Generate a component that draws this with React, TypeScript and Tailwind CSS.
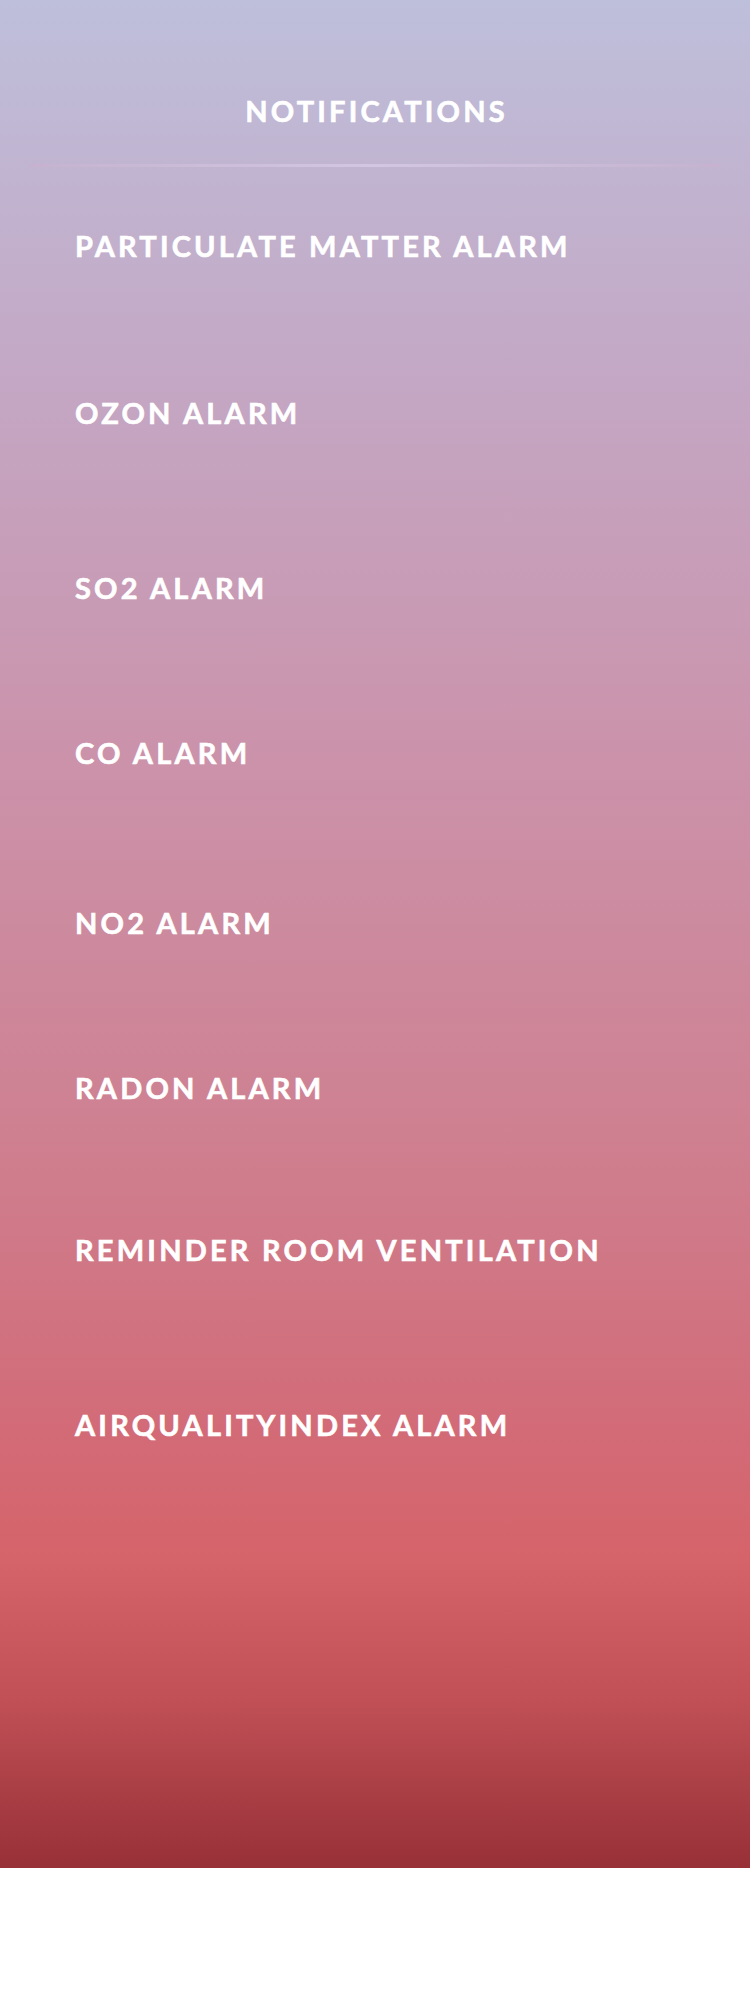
import React from "react";

const items: { label: string; mt: string }[] = [
  { label: "PARTICULATE MATTER ALARM", mt: "mt-[64px]" },
  { label: "OZON ALARM", mt: "mt-[138px]" },
  { label: "SO2 ALARM", mt: "mt-[146px]" },
  { label: "CO ALARM", mt: "mt-[136px]" },
  { label: "NO2 ALARM", mt: "mt-[141px]" },
  { label: "RADON ALARM", mt: "mt-[136px]" },
  { label: "REMINDER ROOM VENTILATION", mt: "mt-[133px]" },
  { label: "AIRQUALITYINDEX ALARM", mt: "mt-[146px]" },
];

export default function App() {
  return (
    <div className="w-[750px] min-h-[1992px] bg-white font-['Lato',sans-serif]">
      <div className="flex h-[1868px] flex-col bg-[linear-gradient(180deg,#bebfdb_0%,#c4a6c3_21.4%,#cb93ab_40%,#ce8293_59%,#d26d7a_75%,#d5636a_83.5%,#c05056_91%,#983038_100%)]">
        <h1 className="pt-[96px] pl-[3px] text-center text-[29px] leading-[29px] font-bold tracking-[3.2px] text-white [-webkit-text-stroke:0.6px_white]">
          NOTIFICATIONS
        </h1>
        <div className="mx-[30px] mt-[39px] h-[3px] bg-[linear-gradient(90deg,rgba(205,175,205,0.45),rgba(215,205,232,0.75)_50%,rgba(205,175,205,0.45))]" />
        <ul className="flex flex-col pl-[75px]">
          {items.map((it) => (
            <li
              key={it.label}
              className={`${it.mt} text-[29px] leading-[29px] font-bold tracking-[3.2px] text-white [-webkit-text-stroke:0.6px_white]`}
            >
              {it.label}
            </li>
          ))}
        </ul>
      </div>
    </div>
  );
}
